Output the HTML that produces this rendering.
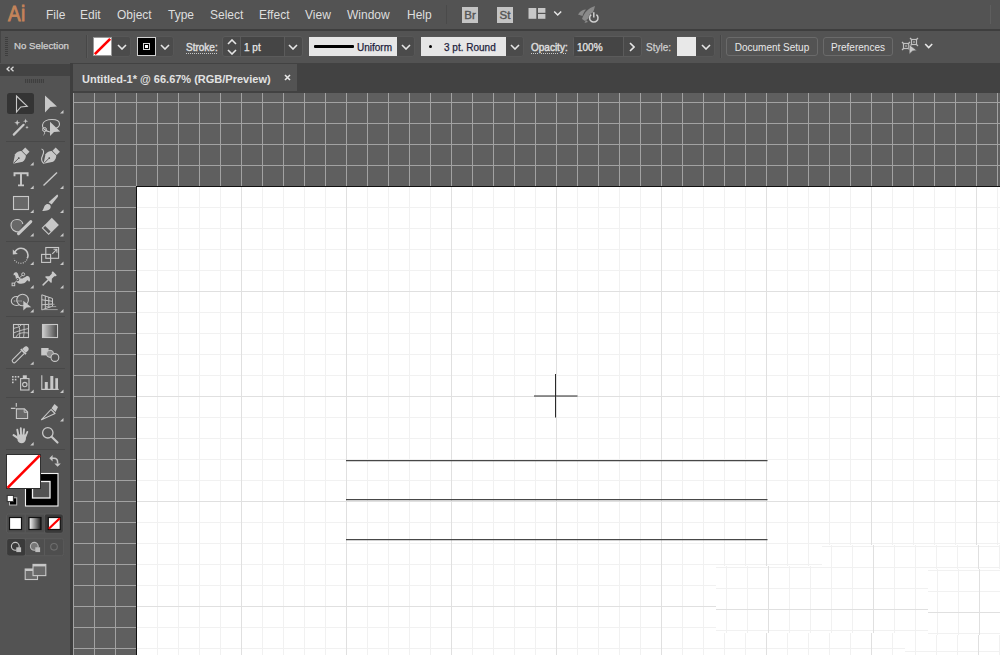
<!DOCTYPE html>
<html><head><meta charset="utf-8">
<style>
*{box-sizing:border-box;margin:0;padding:0}
html,body{width:1000px;height:655px;overflow:hidden;background:#535353;font-family:"Liberation Sans",sans-serif;color:#dcdcdc}
.a{position:absolute}
#menubar{left:0;top:0;width:1000px;height:29px;background:#535353}
#mline{left:0;top:29px;width:1000px;height:2px;background:#3e3e3e}
#optbar{left:0;top:31px;width:1000px;height:32px;background:#535353}
#tabrow{left:73px;top:63px;width:927px;height:30px;background:#424242}
#tab{left:73px;top:64px;width:224px;height:27px;background:#535353}
#canvas{left:73px;top:93px;width:927px;height:562px;background-color:#5f5f5f;
 background-image:linear-gradient(to right,#a2a2a2 1px,transparent 1px),linear-gradient(to bottom,#a2a2a2 1px,transparent 1px);
 background-size:21px 21px;background-position:0px 9px}
#artboard{left:136px;top:186px;width:864px;height:469px;background-color:#fff;border-left:1px solid #111;border-top:1px solid #111;
 background-image:linear-gradient(to right,#e0e0e0 1px,transparent 1px),linear-gradient(to bottom,#e0e0e0 1px,transparent 1px),linear-gradient(to right,#f1f1f1 1px,transparent 1px),linear-gradient(to bottom,#f1f1f1 1px,transparent 1px);
 background-size:105px 105px,105px 105px,21px 21px,21px 21px;background-position:-1px -1px}
#panel{left:0;top:63px;width:73px;height:592px;background:#535353}
#phead{left:0;top:64px;width:70px;height:12px;background:#434343}
#pborder{left:70px;top:63px;width:3px;height:592px;background:#3e3e3e}
.menu{top:8px;font-size:12px;color:#dedede;white-space:nowrap}
.t10{font-size:10px;line-height:12px;white-space:nowrap;-webkit-text-stroke:0.25px currentColor}
.dd{top:36px;height:21px;background:#4b4b4b;border:1px solid #575757;border-radius:3px}
.ul{text-decoration:underline dotted #c8c8c8;text-underline-offset:2px;-webkit-text-stroke:0.45px currentColor}
.btn{top:37px;height:19px;border:1px solid #6a6a6a;border-radius:3px;font-size:10px;line-height:19px;text-align:center;color:#e8e8e8;background:#535353}
</style></head><body>
<div id="menubar" class="a"></div>
<div id="mline" class="a"></div>
<div id="optbar" class="a"></div>
<div id="panel" class="a"></div>
<div id="phead" class="a"></div>
<div id="pborder" class="a"></div>
<div id="tabrow" class="a"></div>
<div id="tab" class="a"></div>
<div id="canvas" class="a"></div>
<div id="artboard" class="a"></div>




<!-- glitch -->
<div class="a" style="left:716px;top:545px;width:284px;height:110px;background-color:#fff;clip-path:polygon(106px 0px,284px 0px,284px 110px,189px 110px,189px 88px,0px 88px,0px 21px,106px 21px);background-image:linear-gradient(to right,#e0e0e0 1px,transparent 1px),linear-gradient(to bottom,#e0e0e0 1px,transparent 1px),linear-gradient(to right,#f1f1f1 1px,transparent 1px),linear-gradient(to bottom,#f1f1f1 1px,transparent 1px);background-size:105px 105px,105px 105px,21px 21px,21px 21px;background-position:52px 64px,52px 64px,10px 1px,10px 1px"></div>
<div class="a" style="left:928px;top:569px;width:72px;height:66px;background-color:#fff;background-image:linear-gradient(to right,#e0e0e0 1px,transparent 1px),linear-gradient(to bottom,#e0e0e0 1px,transparent 1px),linear-gradient(to right,#f1f1f1 1px,transparent 1px),linear-gradient(to bottom,#f1f1f1 1px,transparent 1px);background-size:105px 105px,105px 105px,21px 21px,21px 21px;background-position:51px 43px,51px 43px,9px 1px,9px 1px"></div>
<!-- art -->
<svg class="a" style="left:0;top:0" width="1000" height="655">
<path d="M534 396H577.5 M555.5 374V417.5" stroke="#2a2a2a" stroke-width="1"/>
<path d="M346 460.5H767.5 M346 499.5H767.5 M346 539.5H767.5" stroke="#474747" stroke-width="1.25"/>
</svg>
<!-- toolbar -->
<svg class="a" style="left:0;top:0" width="73" height="655">
<path d="M9.5 66.8L7 69L9.5 71.2 M13.5 66.8L11 69L13.5 71.2" fill="none" stroke="#d8d8d8" stroke-width="1.3"/>
<g fill="#3f3f3f"><rect x="25" y="79" width="19" height="4"/></g>
<g stroke="#535353" stroke-width="0.8"><path d="M26.5 79v4M28.5 79v4M30.5 79v4M32.5 79v4M34.5 79v4M36.5 79v4M38.5 79v4M40.5 79v4M42.5 79v4"/></g>
<rect x="7" y="93" width="27" height="21" rx="2.5" fill="#343434"/>
<path d="M16.5 96L27.3 106.3L20.8 107L16.5 112Z" fill="none" stroke="#c8c8c8" stroke-width="1.1" stroke-linejoin="miter"/>
<path d="M45 95.5L57 106.4L50.2 107L45 112.6Z" fill="#c8c8c8"/>
<path d="M63.5 110.0L63.5 113.5L60.0 113.5Z" fill="#c8c8c8"/>
<!-- magic wand -->
<path d="M13.8 134.6L23.6 124.8" stroke="#c8c8c8" stroke-width="2.2" stroke-linecap="round"/>
<path d="M17.2 119.8L18 122L20.2 122.8L18 123.6L17.2 125.8L16.4 123.6L14.2 122.8L16.4 122Z" fill="#c8c8c8"/>
<path d="M25.6 118.6L26.2 120.6L28.2 121.2L26.2 121.8L25.6 123.8L25 121.8L23 121.2L25 120.6Z" fill="#c8c8c8"/>
<path d="M27 125.8L27.6 127L28.8 127.4L27.6 127.8L27 129L26.4 127.8L25.2 127.4L26.4 127Z" fill="#c8c8c8"/>
<!-- lasso -->
<path d="M50 132 C45 131 42 128 42.5 125 C43 121 48 119.5 52 119.5 C56 119.5 59.5 121 59.5 124 C59.5 126 58 127.5 56 128.3" fill="none" stroke="#c8c8c8" stroke-width="1.1"/>
<circle cx="44.5" cy="129.5" r="2" fill="none" stroke="#c8c8c8" stroke-width="1"/>
<path d="M44.5 131.5 C44.5 133 45 134 43.5 135" fill="none" stroke="#c8c8c8" stroke-width="1"/>
<path d="M50 121.8L60.2 131.6L54 132L50 136Z" fill="#c8c8c8"/>
<!-- sep -->
<rect x="6" y="141" width="59" height="1" fill="#484848"/>
<!-- pen -->
<g transform="translate(20.6 156.3) rotate(45)">
 <path d="M0 10.6 L-5.4 2.4 C-5.8 -0.5 -4.6 -3 -3.2 -4.2 L3.2 -4.2 C4.6 -3 5.8 -0.5 5.4 2.4 Z" fill="#c8c8c8"/>
 <rect x="-3" y="-9.6" width="6" height="4.6" fill="#c8c8c8"/>
 <path d="M0 10.2L0 3" stroke="#535353" stroke-width="0.9"/>
 <circle cx="0" cy="2.5" r="0.9" fill="#535353"/>
</g>
<path d="M33.7 162.1L33.7 165.6L30.2 165.6Z" fill="#c8c8c8"/>
<!-- curvature pen -->
<g transform="translate(51 156.3) rotate(45)">
 <path d="M0 10.6 L-5.4 2.4 C-5.8 -0.5 -4.6 -3 -3.2 -4.2 L3.2 -4.2 C4.6 -3 5.8 -0.5 5.4 2.4 Z" fill="#c8c8c8"/>
 <rect x="-3" y="-9.6" width="6" height="4.6" fill="#c8c8c8"/>
 <path d="M0 10.2L0 3" stroke="#535353" stroke-width="0.9"/>
 <circle cx="0" cy="2.5" r="0.9" fill="#535353"/>
</g>
<path d="M41.5 149 C44 149.5 44 152.5 42.8 155 C41.3 158 41.3 161.5 43.8 163.5" fill="none" stroke="#c8c8c8" stroke-width="1.1"/>
<!-- type -->
<path d="M14.5 176.2V173.2H27.6V176.2 M21 173.2V185.4 M18 185.4H24" fill="none" stroke="#c8c8c8" stroke-width="1.9"/>
<path d="M33.7 185.5L33.7 189L30.2 189Z" fill="#c8c8c8"/>
<!-- line -->
<path d="M43.5 185.6L57 172.4" stroke="#c8c8c8" stroke-width="1.4"/>
<path d="M63.5 185.5L63.5 189L60.0 189Z" fill="#c8c8c8"/>
<!-- rect -->
<rect x="13.5" y="196.5" width="15" height="13" fill="#686868" stroke="#c8c8c8" stroke-width="1.1"/>
<path d="M33.7 209.5L33.7 213L30.2 213Z" fill="#c8c8c8"/>
<!-- brush -->
<path d="M57.2 194.6 C58.3 195.3 58.3 196.2 57.7 197 L51.6 204.6 L48.6 202.2 Z" fill="#c8c8c8"/>
<path d="M42.2 210.9 C43.5 209.8 43.6 207.6 44.8 205.6 C45.8 204 48 203.4 49.6 204.5 C51.2 205.8 51 208 49.6 209.3 C48 210.8 45 211 42.2 210.9Z" fill="#c8c8c8"/>
<path d="M63.5 209.5L63.5 213L60 213Z" fill="#c8c8c8"/>
<!-- shaper -->
<path d="M19 232 C14.5 232 11 229.5 11 225.5 C11 221.5 14 219.5 17 219.5 C20 219.5 22.5 221.5 22.8 224" fill="#686868" stroke="#c8c8c8" stroke-width="1.1"/>
<path d="M18.5 233.6L30.8 221.6" stroke="#c8c8c8" stroke-width="3" stroke-linecap="round"/>
<path d="M33.7 233.0L33.7 236.5L30.2 236.5Z" fill="#c8c8c8"/>
<!-- eraser -->
<g transform="translate(50.4 226.3) rotate(45)">
<rect x="-5" y="-7" width="10" height="10" fill="#c8c8c8"/>
<rect x="-4.45" y="3" width="8.9" height="3.9" fill="#535353" stroke="#c8c8c8" stroke-width="1.1"/>
</g>
<path d="M63.5 233L63.5 236.5L60 236.5Z" fill="#c8c8c8"/>
<rect x="6" y="241" width="59" height="1" fill="#484848"/>
<!-- rotate -->
<path d="M14.5 252.5 C16 249.5 18.5 248.2 21 248.2 C25 248.2 28 251.5 28 255.3 C28 256.5 27.7 257.5 27.2 258.4" fill="none" stroke="#c8c8c8" stroke-width="1.6"/>
<path d="M12.8 249.5L17.8 254L12.8 254.5Z" fill="#c8c8c8"/>
<path d="M27 259.5 C25.5 262 23.5 263.2 20.8 263.2 C17.5 263.2 15 261.5 13.8 258.8" fill="none" stroke="#c8c8c8" stroke-width="1.1" stroke-dasharray="1 1.3"/>
<path d="M33.7 261.5L33.7 265L30.2 265Z" fill="#c8c8c8"/>
<!-- scale -->
<rect x="45.8" y="247.5" width="12.8" height="10.8" fill="none" stroke="#c8c8c8" stroke-width="1.1"/>
<rect x="41.6" y="254.4" width="9" height="8" fill="none" stroke="#c8c8c8" stroke-width="1.1"/>
<path d="M52.3 253.8L56.5 249.6 M53.5 249.3H56.9V252.7" fill="none" stroke="#c8c8c8" stroke-width="1.1"/>
<path d="M63.5 261.5L63.5 265L60.0 265Z" fill="#c8c8c8"/>
<!-- puppet warp -->
<path d="M13.6 275 C13.2 272.2 16.6 271.2 17.8 273.6 C18.8 275.6 18.6 277.4 20.2 278.2 C22.2 279.2 24 277.4 26 276.4 C28.2 275.4 30.2 277 30 280 C30 281.6 28.8 282 28.4 281 C28 279.8 27.2 280 26.2 281.6 C24.2 284.2 19.2 284.6 17 282.2 C15.4 280.2 16.2 277.2 15.2 275.8 C14.6 275.2 14 275.8 13.6 275Z" fill="#c8c8c8"/>
<circle cx="17.6" cy="279.6" r="1.6" fill="#535353"/><circle cx="17.6" cy="279.6" r="0.7" fill="#c8c8c8"/>
<circle cx="23.2" cy="274.3" r="1.5" fill="none" stroke="#c8c8c8" stroke-width="1"/>
<path d="M14.2 283.6 L16.4 281 M19 278.2 L22.2 275.4" stroke="#c8c8c8" stroke-width="0.9"/>
<rect x="12.1" y="283.1" width="2.6" height="2.6" fill="#535353" stroke="#c8c8c8" stroke-width="1"/>
<path d="M33.7 285.1L33.7 288.6L30.2 288.6Z" fill="#c8c8c8"/>
<!-- pin -->
<g transform="translate(49.5 278.5) rotate(45)">
<path d="M-2.8 -7.5H2.8V-6 L1.8 -5 V-1.5 L4.2 1 V2 H-4.2 V1 L-1.8 -1.5 V-5 L-2.8 -6Z" fill="#c8c8c8"/>
<path d="M0 2V9" stroke="#c8c8c8" stroke-width="1.5" stroke-linecap="round"/>
</g>
<path d="M63.5 285.1L63.5 288.6L60.0 288.6Z" fill="#c8c8c8"/>
<!-- shape builder -->
<ellipse cx="16.5" cy="301" rx="5.2" ry="4.5" fill="none" stroke="#c8c8c8" stroke-width="1.1"/>
<circle cx="22.6" cy="300" r="5.8" fill="#5d5d5d" stroke="#c8c8c8" stroke-width="1.1"/>
<path d="M13.8 301H22" stroke="#c8c8c8" stroke-width="1" stroke-dasharray="1 0.9"/>
<path d="M23.3 300.7L31.3 307.2L26.6 307.4L23.3 310.6Z" fill="#c8c8c8"/>
<path d="M33.7 309L33.7 312.5L30.2 312.5Z" fill="#c8c8c8"/>
<!-- perspective -->
<path d="M41.8 294.8L52.5 298.5V306.2L41.8 309.9Z M41.8 299.8L52.5 301.3 M41.8 304.8L52.5 304 M45.3 295.9V308.8 M48.8 297.2V307.6" fill="none" stroke="#c8c8c8" stroke-width="1"/>
<path d="M48 304.3H54.5 M46 306.6H56.2 M42 309.6H57.7" stroke="#a9a9a9" stroke-width="0.9"/>
<path d="M63.5 309L63.5 312.5L60.0 312.5Z" fill="#c8c8c8"/>
<rect x="6" y="316" width="59" height="1" fill="#484848"/>
<!-- mesh -->
<rect x="13.5" y="324.5" width="15" height="13" fill="none" stroke="#c8c8c8" stroke-width="1.1"/>
<path d="M13.5 328.5 C17 327 19 328 21 325 M13.5 333 C18 331 22 330 28.5 328.5 M16 337.5 C17 334 20 332 28.5 333 M17.5 324.5 C20 327 20 330 19.5 337.5 M24 324.5 C24 328 24.5 332 23.5 337.5" fill="none" stroke="#c8c8c8" stroke-width="0.9"/>
<!-- gradient -->
<defs><linearGradient id="gr" x1="0" x2="1"><stop offset="0" stop-color="#d0d0d0"/><stop offset="1" stop-color="#454545"/></linearGradient>
<linearGradient id="gr2" x1="0" x2="1"><stop offset="0" stop-color="#ffffff"/><stop offset="1" stop-color="#1a1a1a"/></linearGradient></defs>
<rect x="42.5" y="324.5" width="15" height="13" fill="url(#gr)" stroke="#c8c8c8" stroke-width="1.1"/>
<!-- eyedropper -->
<g transform="translate(19.8 355.2) rotate(45)">
<path d="M-2.6 -6 V-9 C-2.6 -12.2 2.6 -12.2 2.6 -9 V-6Z" fill="#c8c8c8"/>
<rect x="-3.6" y="-6" width="7.2" height="1.8" fill="#c8c8c8"/>
<path d="M-1.9 -4.2 V8.2 C-1.9 10.4 1.9 10.4 1.9 8.2 V-4.2" fill="none" stroke="#c8c8c8" stroke-width="1.1"/>
</g>
<path d="M33.7 361.4L33.7 364.8L30.2 364.8Z" fill="#c8c8c8"/>
<!-- blend -->
<rect x="41.2" y="348" width="7.4" height="7.4" fill="#c8c8c8"/>
<circle cx="50" cy="353.8" r="3.6" fill="#8a8a8a" stroke="#c8c8c8" stroke-width="1"/>
<circle cx="54.9" cy="357.5" r="3.9" fill="#535353" stroke="#c8c8c8" stroke-width="1.1"/>
<rect x="6" y="368" width="59" height="1" fill="#484848"/>
<!-- symbol sprayer -->
<g fill="#c8c8c8"><rect x="12" y="376" width="1.6" height="1.6"/><rect x="14.8" y="376" width="1.6" height="1.6"/><rect x="17.6" y="376" width="1.6" height="1.6"/><rect x="12" y="378.8" width="1.6" height="1.6"/><rect x="14.8" y="378.8" width="1.6" height="1.6"/><rect x="12" y="381.6" width="1.6" height="1.6"/></g>
<rect x="20.6" y="378.6" width="8.4" height="11.4" fill="none" stroke="#c8c8c8" stroke-width="1.1"/>
<rect x="22.8" y="375.3" width="4" height="3.3" fill="#c8c8c8"/>
<circle cx="24.8" cy="384.6" r="2.2" fill="none" stroke="#c8c8c8" stroke-width="1.1"/>
<path d="M33.7 389.4L33.7 392.9L30.2 392.9Z" fill="#c8c8c8"/>
<!-- graph -->
<path d="M41.8 375.2V389.4H58.7" fill="none" stroke="#c8c8c8" stroke-width="1.1"/>
<rect x="44.8" y="382" width="3" height="7.4" fill="#c8c8c8"/>
<rect x="50.3" y="376" width="3" height="13.4" fill="#c8c8c8"/>
<rect x="55.3" y="378.2" width="2.7" height="11.2" fill="#c8c8c8"/>
<path d="M63.5 389.4L63.5 392.9L60.0 392.9Z" fill="#c8c8c8"/>
<rect x="6" y="397" width="59" height="1" fill="#484848"/>
<!-- artboard tool -->
<path d="M10.9 408.4H15.5 M16.3 403V406.8" stroke="#c8c8c8" stroke-width="1.1"/>
<path d="M16.4 408.9H24.5L27.6 412V418.5H16.4Z" fill="#686868" stroke="#c8c8c8" stroke-width="1.1"/>
<path d="M24.2 409V412.3H27.5" fill="none" stroke="#c8c8c8" stroke-width="0.9"/>
<!-- slice/knife -->
<path d="M41.5 419.7L51 409.5L55 413.5Z" fill="none" stroke="#c8c8c8" stroke-width="1.1" stroke-linejoin="round"/>
<path d="M51.5 408.2L54.5 404L58 407L55.5 412Z" fill="#c8c8c8"/>
<path d="M63.5 418.0L63.5 421.5L60.0 421.5Z" fill="#c8c8c8"/>
<!-- hand -->
<g stroke="#c8c8c8" stroke-linecap="round" fill="none">
<path d="M19.5 439 L13.6 435.2" stroke-width="2.1"/>
<path d="M18.6 436.5 L17.3 429.7" stroke-width="1.9"/>
<path d="M21.1 436.5 L20.8 428.3" stroke-width="1.9"/>
<path d="M23.3 436.5 L24 429.3" stroke-width="1.9"/>
<path d="M25 437.5 L27.3 432" stroke-width="1.9"/>
</g>
<path d="M17.2 434.5 H26.3 L25.8 439.5 C25 442 24 443.2 21.5 443.2 C19.5 443.2 18.5 442.2 17.6 440.5 Z" fill="#c8c8c8"/>
<path d="M33.7 442.0L33.7 445.5L30.2 445.5Z" fill="#c8c8c8"/>
<!-- zoom -->
<circle cx="47.8" cy="432.8" r="5.2" fill="none" stroke="#c8c8c8" stroke-width="1.3"/>
<path d="M51.6 436.8L57.5 442.5" stroke="#c8c8c8" stroke-width="2.2" stroke-linecap="round"/>
<rect x="6" y="449" width="59" height="1" fill="#484848"/>
<!-- fill/stroke -->
<path d="M51.5 458.2 H54 C56.6 458.2 57.6 459.4 57.6 462 V463.5" fill="none" stroke="#c8c8c8" stroke-width="1.5"/>
<path d="M49.3 458.2L52.6 455V461.4Z M57.6 466.8L54.4 463.4H60.8Z" fill="#c8c8c8"/>
<rect x="25.5" y="473.5" width="32.5" height="32.5" fill="#000" stroke="#f2f2f2" stroke-width="1.1"/>
<rect x="32.5" y="481.5" width="17.5" height="16.5" fill="#535353" stroke="#f2f2f2" stroke-width="1.3"/>
<rect x="6.5" y="454.5" width="34" height="34" fill="#fff" stroke="#2f2f2f" stroke-width="1"/>
<path d="M7.5 487.8L39.8 455.3" stroke="#ff0000" stroke-width="2.6"/>
<rect x="9.5" y="497.8" width="7.2" height="7.2" fill="#000" stroke="#b8b8b8" stroke-width="1"/>
<rect x="7.2" y="495.4" width="6.2" height="6.2" fill="#fff" stroke="#333" stroke-width="1"/>
<!-- color mode -->
<rect x="6.5" y="514" width="56.5" height="19" fill="#4e4e4e" stroke="#5a5a5a" stroke-width="1" rx="2"/>
<path d="M25.2 514.5V532.5 M44.5 514.5V532.5" stroke="#5a5a5a" stroke-width="1"/>
<rect x="44.8" y="514.5" width="18" height="18.2" fill="#393939" rx="2"/>
<rect x="9.5" y="517.5" width="12" height="12" fill="#fff" stroke="#111" stroke-width="1.2"/>
<rect x="29" y="517.5" width="12" height="12" fill="url(#gr2)" stroke="#111" stroke-width="1.2"/>
<rect x="48.3" y="517.5" width="12" height="12" fill="#fff" stroke="#111" stroke-width="1.2"/>
<path d="M48.8 528.8L59.8 518.2" stroke="#ff0000" stroke-width="2.2"/>
<!-- draw modes -->
<rect x="7" y="538.7" width="56.6" height="17" fill="#4e4e4e" stroke="#5a5a5a" stroke-width="1" rx="2"/>
<path d="M25.5 539V555.5 M44.5 539V555.5" stroke="#5a5a5a" stroke-width="1"/>
<rect x="7.2" y="539" width="18" height="16.6" fill="#3a3a3a" rx="2"/>
<circle cx="15.3" cy="546.3" r="3.9" fill="none" stroke="#c6c6c6" stroke-width="1.1"/>
<rect x="16.3" y="547.3" width="4.8" height="4.8" fill="#bdbdbd"/>
<circle cx="34.3" cy="546.3" r="3.9" fill="#777" stroke="#b8b8b8" stroke-width="1.1"/>
<rect x="35.3" y="547.3" width="4.8" height="4.8" fill="#bdbdbd"/>
<circle cx="54" cy="546.8" r="3.3" fill="none" stroke="#6e6e6e" stroke-width="1.1"/>
<!-- screen mode -->
<rect x="25.2" y="569" width="12.3" height="10.5" fill="#6a6a6a" stroke="#c8c8c8" stroke-width="1.1"/>
<rect x="25.2" y="569" width="12.3" height="2" fill="#c8c8c8"/>
<rect x="33" y="564.4" width="12.8" height="11.2" fill="#6a6a6a" stroke="#c8c8c8" stroke-width="1.1"/>
<rect x="33" y="564.4" width="12.8" height="2" fill="#c8c8c8"/>
</svg>
<!-- tab -->
<div class="a" style="left:82px;top:73px;font-size:11px;line-height:13px;font-weight:bold;color:#e2e2e2;white-space:nowrap">Untitled-1* @ 66.67% (RGB/Preview)</div>
<svg class="a" style="left:284px;top:74px" width="7" height="7"><path d="M1 1L6 6M6 1L1 6" stroke="#e8e8e8" stroke-width="1.6"/></svg>
<!-- menu -->
<div class="a" style="left:8px;top:1px;font-size:22.5px;line-height:26px;color:#c4845a;-webkit-text-stroke:0.9px #c4845a;transform:scaleX(0.84);transform-origin:0 0;letter-spacing:0.5px">Ai</div>
<div class="a menu" style="left:46px">File</div>
<div class="a menu" style="left:80px">Edit</div>
<div class="a menu" style="left:117px">Object</div>
<div class="a menu" style="left:168px">Type</div>
<div class="a menu" style="left:210px">Select</div>
<div class="a menu" style="left:259px">Effect</div>
<div class="a menu" style="left:305px">View</div>
<div class="a menu" style="left:347px">Window</div>
<div class="a menu" style="left:407px">Help</div>



<div class="a" style="left:446px;top:5px;width:1px;height:19px;background:#4a4a4a"></div>
<div class="a" style="left:990px;top:5px;width:1px;height:19px;background:#5e5e5e"></div>
<div class="a" style="left:462px;top:7px;width:16px;height:16px;background:#c4c4c4;color:#555;font-size:11.5px;line-height:16px;text-align:center;-webkit-text-stroke:0.4px #555">Br</div>
<div class="a" style="left:497px;top:7px;width:16px;height:16px;background:#c4c4c4;color:#555;font-size:11.5px;line-height:16px;text-align:center;-webkit-text-stroke:0.4px #555">St</div>
<svg class="a" style="left:520px;top:0" width="90" height="28">
<rect x="8.5" y="8" width="7.8" height="10.8" fill="#c8c8c8"/>
<rect x="18" y="8" width="7.4" height="4.8" fill="#c8c8c8"/>
<rect x="18" y="14" width="7.4" height="4.8" fill="#c8c8c8"/>
<polyline points="34.2,11.5 37.7,15 41.2,11.5" fill="none" stroke="#e8e8e8" stroke-width="1.5"/>
<path d="M58 14.5 C60 11 63 9.5 66 9.5 C64 12 63 14 62.5 16 Z" fill="#8a8a8a"/>
<path d="M62 19 C64 13 68 8 75 6 C74 11 72 15 69 18 L65 21 Z" fill="#8a8a8a"/>
<path d="M64.5 23 L66 20 L68 22 Z" fill="#8a8a8a"/>
<circle cx="73.8" cy="17.9" r="5.3" fill="#535353"/>
<path d="M71.2 14.6 A4.2 4.2 0 1 0 76.4 14.6" fill="none" stroke="#d0d0d0" stroke-width="1.5"/>
<path d="M73.8 12.3V17.6" stroke="#d0d0d0" stroke-width="1.5"/>
</svg>
<!-- option bar -->
<div class="a" style="left:0;top:31px;width:1px;height:32px;background:#454545"></div>
<div class="a" style="left:5px;top:37px;width:3px;height:19px;background:repeating-linear-gradient(to bottom,#3e3e3e 0 1px,transparent 1px 2px)"></div>
<div class="a t10" style="left:14px;top:40px;color:#d0d0d0;font-size:9.7px">No Selection</div>
<div class="a" style="left:86px;top:35px;width:1px;height:23px;background:#474747"></div>
<div class="a" style="left:87px;top:35px;width:1px;height:23px;background:#5a5a5a"></div>
<!-- fill swatch -->
<div class="a dd" style="left:93px;width:38px"></div>
<div class="a" style="left:93px;top:37px;width:19px;height:19px;background:#fff;border:1px solid #999"></div>
<svg class="a" style="left:93px;top:37px" width="19" height="19"><line x1="1.8" y1="17.2" x2="17.2" y2="1.8" stroke="#ff0000" stroke-width="2.6"/></svg>
<svg class="a chev" style="left:117px;top:44px" width="10" height="6"><polyline points="1,1 5,5 9,1" fill="none" stroke="#e6e6e6" stroke-width="1.6"/></svg>
<!-- stroke swatch -->
<div class="a dd" style="left:137px;width:37px"></div>
<div class="a" style="left:137px;top:37px;width:19px;height:19px;background:#000;border:1px solid #cfcfcf"></div>
<div class="a" style="left:143px;top:43px;width:7px;height:7px;border:1px solid #d8d8d8"></div>
<div class="a" style="left:145px;top:45px;width:3px;height:3px;background:#fff"></div>
<svg class="a chev" style="left:160px;top:44px" width="10" height="6"><polyline points="1,1 5,5 9,1" fill="none" stroke="#e6e6e6" stroke-width="1.6"/></svg>
<!-- stroke label -->
<div class="a t10 ul" style="left:186px;top:42px;color:#dcdcdc">Stroke:</div>
<!-- spinner -->
<div class="a" style="left:222px;top:36px;width:81px;height:21px;background:#4a4a4a;border:1px solid #5b5b5b;border-radius:3px"></div>
<div class="a" style="left:240px;top:37px;width:1px;height:19px;background:#5b5b5b"></div>
<div class="a" style="left:241px;top:37px;width:43px;height:19px;background:#454545"></div>
<div class="a" style="left:284px;top:37px;width:1px;height:19px;background:#5b5b5b"></div>
<svg class="a" style="left:227px;top:39px" width="10" height="6"><polyline points="1,5 5,1 9,5" fill="none" stroke="#e6e6e6" stroke-width="1.6"/></svg>
<svg class="a" style="left:227px;top:49px" width="10" height="6"><polyline points="1,1 5,5 9,1" fill="none" stroke="#e6e6e6" stroke-width="1.6"/></svg>
<div class="a t10" style="left:244px;top:42px;color:#e8e8e8">1 pt</div>
<svg class="a" style="left:288px;top:44px" width="10" height="6"><polyline points="1,1 5,5 9,1" fill="none" stroke="#e6e6e6" stroke-width="1.6"/></svg>
<!-- uniform -->
<div class="a dd" style="left:309px;width:106px"></div>
<div class="a" style="left:309px;top:37px;width:88px;height:19px;background:#e6e6e6"></div>
<div class="a" style="left:314px;top:45px;width:40px;height:3px;background:#000;border-radius:1px"></div>
<div class="a t10" style="left:357px;top:42px;color:#1e1e3c">Uniform</div>
<svg class="a" style="left:401px;top:44px" width="10" height="6"><polyline points="1,1 5,5 9,1" fill="none" stroke="#e6e6e6" stroke-width="1.6"/></svg>
<!-- round -->
<div class="a dd" style="left:421px;width:103px"></div>
<div class="a" style="left:421px;top:37px;width:85px;height:19px;background:#e6e6e6"></div>
<div class="a" style="left:429px;top:45px;width:3px;height:3px;background:#000;border-radius:50%"></div>
<div class="a t10" style="left:444px;top:42px;color:#1e1e3c">3 pt. Round</div>
<svg class="a" style="left:510px;top:44px" width="10" height="6"><polyline points="1,1 5,5 9,1" fill="none" stroke="#e6e6e6" stroke-width="1.6"/></svg>
<!-- opacity -->
<div class="a t10 ul" style="left:531px;top:42px;color:#dcdcdc">Opacity:</div>
<div class="a" style="left:573px;top:36px;width:69px;height:21px;background:#4a4a4a;border:1px solid #5b5b5b;border-radius:3px"></div>
<div class="a" style="left:574px;top:37px;width:49px;height:19px;background:#454545"></div>
<div class="a" style="left:623px;top:37px;width:1px;height:19px;background:#5b5b5b"></div>
<div class="a t10" style="left:577px;top:42px;color:#e8e8e8">100%</div>
<svg class="a" style="left:629px;top:42px" width="6" height="10"><polyline points="1,1 5,5 1,9" fill="none" stroke="#e6e6e6" stroke-width="1.6"/></svg>
<div class="a t10" style="left:646px;top:42px;color:#cfcfcf">Style:</div>
<div class="a dd" style="left:677px;width:38px"></div>
<div class="a" style="left:677px;top:37px;width:19px;height:19px;background:#e8e8e8"></div>
<svg class="a" style="left:701px;top:44px" width="10" height="6"><polyline points="1,1 5,5 9,1" fill="none" stroke="#e6e6e6" stroke-width="1.6"/></svg>
<div class="a" style="left:720px;top:35px;width:1px;height:23px;background:#474747"></div>
<div class="a" style="left:721px;top:35px;width:1px;height:23px;background:#5a5a5a"></div>
<div class="a btn" style="left:726px;width:92px">Document Setup</div>
<div class="a btn" style="left:823px;width:70px">Preferences</div>
<svg class="a" style="left:900px;top:36px" width="22" height="20">
 <g fill="none" stroke="#c0c0c0" stroke-width="1.2">
 <rect x="3.5" y="7.5" width="5" height="5"/><path d="M2 6L3.5 7.5M10 6L8.5 7.5M2 14L3.5 12.5M10 14L8.5 12.5"/>
 <rect x="11.5" y="3.5" width="5" height="5"/><path d="M10 2L11.5 3.5M18 2L16.5 3.5M10 10L11.5 8.5M18 10L16.5 8.5"/>
 </g>
 <rect x="5" y="9" width="2" height="2" fill="#8a8a8a"/><rect x="13" y="5" width="2" height="2" fill="#8a8a8a"/>
 <path d="M9.2 8.6 L16.8 14.5 L12.6 15 L9.2 18.2 Z" fill="#c8c8c8" stroke="#535353" stroke-width="0.6"/>
</svg>
<svg class="a" style="left:924px;top:43px" width="10" height="6"><polyline points="1.2,1 4.7,4.5 8.2,1" fill="none" stroke="#e6e6e6" stroke-width="1.6"/></svg>

</body></html>
